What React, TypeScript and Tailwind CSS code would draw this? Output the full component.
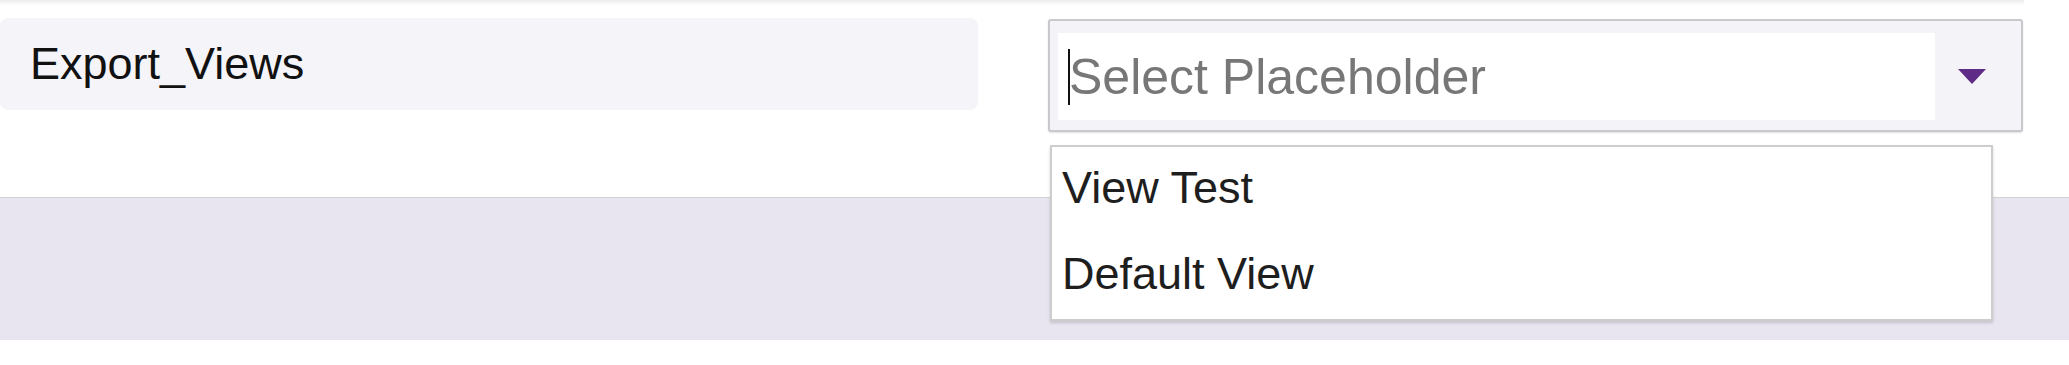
export default function App() {
  const options = ["View Test", "Default View"];

  return (
    <div className="relative h-[365px] w-[2069px] overflow-hidden bg-white font-['Liberation_Sans',Arial,sans-serif]">
      {/* bottom edge of the row above */}
      <div className="absolute left-0 top-0 h-[5px] w-[2024px] bg-gradient-to-b from-[#ececec] to-white" />

      <div className="h-[198px] border-b border-[#d3d3d3] bg-white pt-[18px]">
        <div className="flex items-start">
          <div className="h-[92px] w-[978px] rounded-lg bg-[#f4f4f9] pl-[30px] pt-[21px] text-[45px] leading-[50px] text-[#111]">
            Export_Views
          </div>

          <div className="relative ml-[70px] mt-[1px] w-[975px]">
            <div className="flex h-[113px] rounded-[3px] border-2 border-[#c9c9cc] bg-[#f3f3f8] pb-[10px] pl-[8px] pt-[12px] shadow-[0_1px_2px_rgba(0,0,0,0.12)]">
              <div className="flex h-[87px] w-[877px] items-center bg-white pl-[10px]">
                <span className="h-[56px] w-[2px] shrink-0 bg-[#111]" />
                <span className="-ml-[1px] text-[50px] leading-[56px] text-[#777]">
                  Select Placeholder
                </span>
              </div>
              <div className="flex flex-1 items-center pl-[23px]">
                <svg width="28" height="15" viewBox="0 0 28 15">
                  <polygon points="0,0 28,0 14,15" fill="#5e2c87" />
                </svg>
              </div>
            </div>

            <div className="absolute left-[2px] top-[126px] z-10 h-[176px] w-[943px] border-2 border-[#cdcdcd] bg-white shadow-[0_2px_3px_rgba(0,0,0,0.15)]">
              {options.map((o) => (
                <div
                  key={o}
                  className="h-[86px] pl-[10px] pt-[16px] text-[45px] leading-[50px] text-[#1e1e1e]"
                >
                  {o}
                </div>
              ))}
            </div>
          </div>
        </div>
      </div>

      <div className="h-[142px] bg-[#e8e4f0]" />
    </div>
  );
}
